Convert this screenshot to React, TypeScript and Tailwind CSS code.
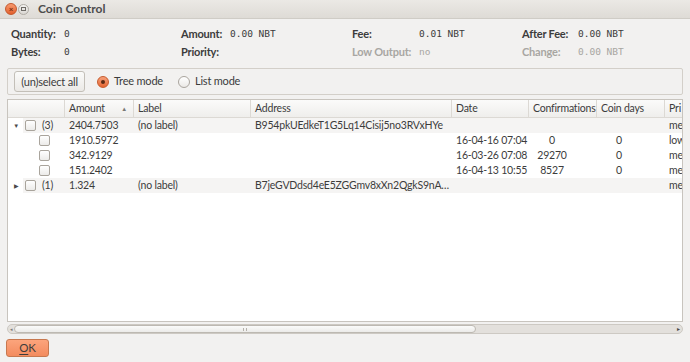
import React from "react";

const ui = { fontFamily: "Lato, 'Open Sans', sans-serif" };
const mono = { fontFamily: "'DejaVu Sans Mono', 'Liberation Mono', monospace" };

const cols = "grid grid-cols-[57px_69px_117px_201px_77px_68px_68px_1fr]";

function Check({ className = "" }: { className?: string }) {
  return (
    <span
      className={`inline-block w-[11px] h-[11px] rounded-[2px] border border-[#a9a49c] bg-gradient-to-b from-[#ffffff] to-[#ecebe9] ${className}`}
    />
  );
}

function Info({ label, value, dim }: { label: string; value: string; dim?: boolean }) {
  return (
    <>
      <span className={`font-bold text-[11px] ${dim ? "text-[#a8a6a2]" : "text-[#3c3c3c]"}`}>{label}</span>
      <span style={mono} className={`text-[9.5px] tracking-normal ${dim ? "text-[#a8a6a2]" : "text-[#3c3c3c]"}`}>
        {value}
      </span>
    </>
  );
}

const headers = ["", "Amount", "Label", "Address", "Date", "Confirmations", "Coin days", "Pri"];

type Row = {
  top?: boolean;
  expand?: "open" | "closed";
  count?: string;
  amount: string;
  label?: string;
  address?: string;
  date?: string;
  conf?: string;
  days?: string;
  pri: string;
};

const rows: Row[] = [
  { top: true, expand: "open", count: "(3)", amount: "2404.7503", label: "(no label)", address: "B954pkUEdkeT1G5Lq14Cisij5no3RVxHYe", pri: "me" },
  { amount: "1910.5972", date: "16-04-16 07:04", conf: "0", days: "0", pri: "low" },
  { amount: "342.9129", date: "16-03-26 07:08", conf: "29270", days: "0", pri: "me" },
  { amount: "151.2402", date: "16-04-13 10:55", conf: "8527", days: "0", pri: "me" },
  { top: true, expand: "closed", count: "(1)", amount: "1.324", label: "(no label)", address: "B7jeGVDdsd4eE5ZGGmv8xXn2QgkS9nA…", pri: "me" },
];

export default function App() {
  return (
    <div style={ui} className="w-[690px] h-[362px] bg-[#f2f1f0] text-[#3c3c3c] text-[10.5px] tracking-[-0.2px] flex flex-col overflow-hidden">
      {/* title bar */}
      <div className="h-[19px] flex items-center gap-[1px] pl-[5px] bg-gradient-to-b from-[#ebe9e5] to-[#dedbd6] border-b border-[#cfccc6]">
        <span className="w-[12px] h-[12px] rounded-full bg-gradient-to-b from-[#f7986c] to-[#e2602c] border border-[#c4582c] flex items-center justify-center text-[8px] leading-none text-[#7a2e10] font-bold">
          ×
        </span>
        <span className="w-[11px] h-[11px] rounded-full bg-gradient-to-b from-[#f4f3f1] to-[#d9d6d1] border border-[#b0aca5] flex items-center justify-center">
          <span className="w-[5px] h-[4px] border border-[#6d6a65]" />
        </span>
        <span className="ml-[8px] font-bold text-[12px] tracking-normal text-[#4c4c4c]">Coin Control</span>
      </div>

      {/* summary */}
      <div className="grid grid-cols-[53px_117px_49px_122px_67px_103px_56px_1fr] gap-y-[3px] pl-[11px] pt-[7px] leading-[15px]">
        <Info label="Quantity:" value="0" />
        <Info label="Amount:" value="0.00 NBT" />
        <Info label="Fee:" value="0.01 NBT" />
        <Info label="After Fee:" value="0.00 NBT" />
        <Info label="Bytes:" value="0" />
        <Info label="Priority:" value="" />
        <Info label="Low Output:" value="no" dim />
        <Info label="Change:" value="0.00 NBT" dim />
      </div>

      {/* mode toolbar */}
      <div className="mx-[7px] mt-[9px] h-[27px] rounded-[2px] border border-[#d3cfc9] flex items-center pl-[6px]">
        <button className="h-[21px] w-[71px] rounded-[3px] border border-[#c3bfb8] bg-gradient-to-b from-[#fbfbfa] to-[#ebe9e6] text-[#3c3c3c] text-[11px] leading-none">
          (un)select all
        </button>
        <span className="ml-[12px] w-[12px] h-[12px] rounded-full bg-gradient-to-b from-[#f6a07a] to-[#e5652f] border border-[#c65a2c] flex items-center justify-center">
          <span className="w-[4px] h-[4px] rounded-full bg-[#5c2a14]" />
        </span>
        <span className="ml-[5px] text-[11px]">Tree mode</span>
        <span className="ml-[15px] w-[12px] h-[12px] rounded-full bg-gradient-to-b from-[#ffffff] to-[#ebe9e6] border border-[#aaa59e]" />
        <span className="ml-[5px] text-[11px]">List mode</span>
      </div>

      {/* tree view */}
      <div className="mx-[7px] mt-[4px] flex-1 border border-[#c8c4be] bg-white flex flex-col overflow-hidden">
        <div className={`${cols} h-[18px] bg-gradient-to-b from-[#fbfbfa] to-[#efeeec] border-b border-[#dcd9d4]`}>
          {headers.map((h, i) => (
            <div
              key={i}
              className={`flex items-center pl-[4px] whitespace-nowrap overflow-hidden ${i < headers.length - 1 ? "border-r border-[#dcd9d4]" : ""} ${i === 1 ? "justify-between pr-[6px]" : ""}`}
            >
              {h}
              {i === 1 && <span className="text-[6px] text-[#7a7874]">▲</span>}
            </div>
          ))}
        </div>

        {rows.map((r, i) => (
          <div key={i} className={`${cols} h-[15px] leading-[15px] whitespace-nowrap`}>
            <div className="flex items-center">
              {r.top ? (
                <>
                  <span className="w-[14px] flex justify-center text-[6px] text-[#4a4a4a] ml-[1px]">
                    {r.expand === "open" ? "▼" : "▶"}
                  </span>
                  <div className="flex-1 h-full bg-[#f5f4f3] flex items-center">
                    <Check className="ml-[2px]" />
                    <span className="ml-[6px]">{r.count}</span>
                  </div>
                </>
              ) : (
                <Check className="ml-[31px]" />
              )}
            </div>
            <div className={`pl-[4px] ${r.top ? "bg-[#f5f4f3]" : ""}`}>{r.amount}</div>
            <div className={`pl-[4px] ${r.top ? "bg-[#f5f4f3]" : ""}`}>{r.label}</div>
            <div className={`pl-[4px] overflow-hidden ${r.top ? "bg-[#f5f4f3]" : ""}`}>{r.address}</div>
            <div className={`pl-[4px] overflow-hidden ${r.top ? "bg-[#f5f4f3]" : ""}`}>{r.date}</div>
            <div className={`text-center pr-[22px] ${r.top ? "bg-[#f5f4f3]" : ""}`}>{r.conf}</div>
            <div className={`text-center pr-[24px] ${r.top ? "bg-[#f5f4f3]" : ""}`}>{r.days}</div>
            <div className={`pl-[4px] overflow-hidden ${r.top ? "bg-[#f5f4f3]" : ""}`}>{r.pri}</div>
          </div>
        ))}
      </div>

      {/* horizontal scrollbar */}
      <div className="mx-[7px] mt-[2px] h-[10px] rounded-full border border-[#cdc9c3] bg-[#e3e0dc] flex items-center relative">
        <span className="absolute left-[2px] text-[5px] text-[#7a7874] leading-none">◂</span>
        <div className="ml-[6px] w-[462px] h-[8px] rounded-full border border-[#bdb9b2] bg-gradient-to-b from-[#fbfbfa] to-[#ecebe9] flex items-center justify-center">
          <span className="w-[4px] h-[3px] border-x border-[#b5b1aa]" />
        </div>
        <span className="absolute right-[2px] text-[6px] text-[#4a4a4a] leading-none">▸</span>
      </div>

      {/* buttons */}
      <div className="h-[28px] flex items-center pl-[6px]">
        <button className="w-[43px] h-[18px] rounded-[3px] border border-[#c7784f] bg-gradient-to-b from-[#fca47c] to-[#f38b5e] text-[#3c3c3c] text-[11.5px] leading-none">
          <span className="underline underline-offset-2">O</span>K
        </button>
      </div>
    </div>
  );
}
